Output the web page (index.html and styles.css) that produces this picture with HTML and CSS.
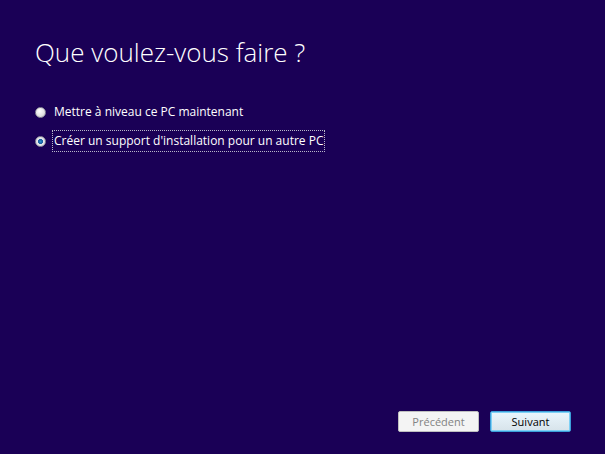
FILE: index.html
```html
<!DOCTYPE html>
<html>
<head>
    <title>Installation de Windows</title>
    <link rel="stylesheet" href="styles.css">
</head>
<body>
    <div class="wizard">
        <h1 class="title">Que voulez-vous faire ?</h1>
        <div class="choices">
            <label class="choice">
                <span class="radio"></span>
                <span class="choice-text">Mettre à niveau ce PC maintenant</span>
            </label>
            <label class="choice">
                <span class="radio checked"></span>
                <span class="choice-text focused">Créer un support d'installation pour un autre PC</span>
            </label>
        </div>
        <div class="buttons">
            <button class="btn" disabled>Précédent</button>
            <button class="btn default">Suivant</button>
        </div>
    </div>
</body>
</html>
```

FILE: styles.css
```css
html, body {
    height: 100%;
}
body {
    margin: 0;
    background: #1a0056;
    color: #ffffff;
    font-family: "Open Sans", "DejaVu Sans", sans-serif;
}
.wizard {
    height: 100%;
    box-sizing: border-box;
    padding: 34px 34px 22px 35px;
    display: flex;
    flex-direction: column;
}
.title {
    margin: 0;
    font-size: 26px;
    font-weight: 300;
    line-height: 36px;
}
.choices {
    margin-top: 32px;
    display: flex;
    flex-direction: column;
    gap: 9px;
}
.choice {
    display: flex;
    align-items: center;
    gap: 6px;
    font-size: 12px;
    height: 20px;
}
.radio {
    width: 9px;
    height: 9px;
    border-radius: 50%;
    border: 1px solid #8f8f9c;
    background: radial-gradient(circle at 40% 35%, #ffffff 0%, #e4e4e4 55%, #c4c4c8 100%);
}
.radio.checked {
    background: radial-gradient(circle, #2d8fd2 0%, #1b5f9e 32%, #2a6aa8 38%, #e8e8ee 45%, #cfd0d6 100%);
}
.choice-text {
    padding: 1px 1px 2px 1px;
    border: 1px solid transparent;
}
.choice-text.focused {
    border: 1px dotted #b8b8c8;
}
.buttons {
    margin-top: auto;
    display: flex;
    justify-content: flex-end;
    gap: 11px;
}
.btn {
    width: 81px;
    height: 21px;
    padding: 0;
    font-family: "Open Sans", "DejaVu Sans", sans-serif;
    font-size: 11px;
    border: 1px solid #adadad;
    border-radius: 2px;
    background: linear-gradient(#f2f2f2, #e3e3e3);
    color: #000000;
}
.btn:disabled {
    background: #f4f4f4;
    border-color: #bfbfbf;
    color: #838383;
}
.btn.default {
    border: 1px solid #3c9fd9;
    box-shadow: inset 0 0 0 1px #7fd0f5;
    background: linear-gradient(#eaf6fd, #d7e3ea);
}
```
